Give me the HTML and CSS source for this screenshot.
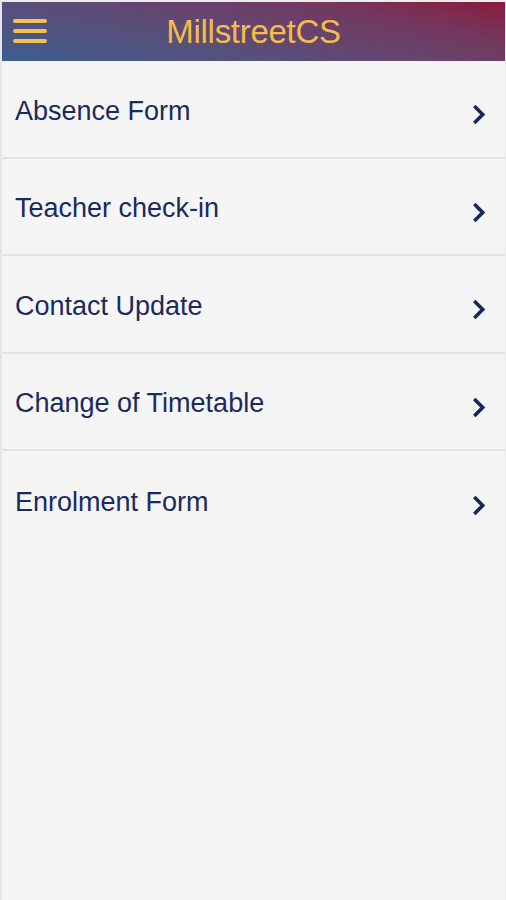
FILE: index.html
```html
<!DOCTYPE html>
<html lang="en">

<head>
  <meta charset="UTF-8">
  <title>MillstreetCS</title>
  <link rel="stylesheet" href="styles.css">
</head>
<body>
  <div class="app">
    <div class="topbar">
      <span class="menu">
        <i></i>
        <i></i>
        <i></i>
      </span>
      <h1>MillstreetCS</h1>
    </div>
    <ul class="list">
      <li>
        <span>Absence Form</span>
        <svg viewBox="0 0 12 20"><path d="M2 2l8 8-8 8"/></svg>
      </li>
      <li>
        <span>Teacher check-in</span>
        <svg viewBox="0 0 12 20"><path d="M2 2l8 8-8 8"/></svg>
      </li>
      <li>
        <span>Contact Update</span>
        <svg viewBox="0 0 12 20"><path d="M2 2l8 8-8 8"/></svg>
      </li>
      <li>
        <span>Change of Timetable</span>
        <svg viewBox="0 0 12 20"><path d="M2 2l8 8-8 8"/></svg>
      </li>
      <li>
        <span>Enrolment Form</span>
        <svg viewBox="0 0 12 20"><path d="M2 2l8 8-8 8"/></svg>
      </li>
    </ul>
  </div>
</body>

</html>
```

FILE: styles.css
```css
* {
  margin: 0;
  padding: 0;
  list-style: none;
  box-sizing: border-box;
}

body {
  background: #f5f5f5;
  font-family: "Liberation Sans", Arial, sans-serif;
}

.app {
  height: 900px;
  border-left: 2px solid #e6e6e6;
  border-right: 1px solid #ececec;
  border-top: 2px solid #ececec;
}

.topbar {
  height: 59px;
  display: flex;
  align-items: center;
  justify-content: center;
  position: relative;
  background: linear-gradient(12deg, #3d5d8f 0%, #5b4d78 40%, #73385f 75%, #8c1b3c 100%);
}

.menu {
  position: absolute;
  left: 11px;
  top: 17px;
  width: 34px;
  display: flex;
  flex-direction: column;
  gap: 6px;
}

.menu i {
  display: block;
  height: 4px;
  border-radius: 2px;
  background: #f8bf4f;
}

.topbar h1 {
  font-weight: normal;
  font-size: 33px;
  color: #f7bb4a;
  letter-spacing: -0.3px;
}

.list li {
  height: 97.5px;
  border-bottom: 2px solid #e3e3e3;
  display: flex;
  align-items: center;
  justify-content: space-between;
  padding: 0 20px 0 13px;
  color: #1a2a5c;
}

.list li:last-child {
  border-bottom: none;
}

.list span {
  font-size: 27px;
  margin-top: 5px;
}

.list svg {
  width: 13px;
  height: 21px;
  fill: none;
  stroke: #16285a;
  stroke-width: 3.4;
  margin-top: 12px;
}
```
